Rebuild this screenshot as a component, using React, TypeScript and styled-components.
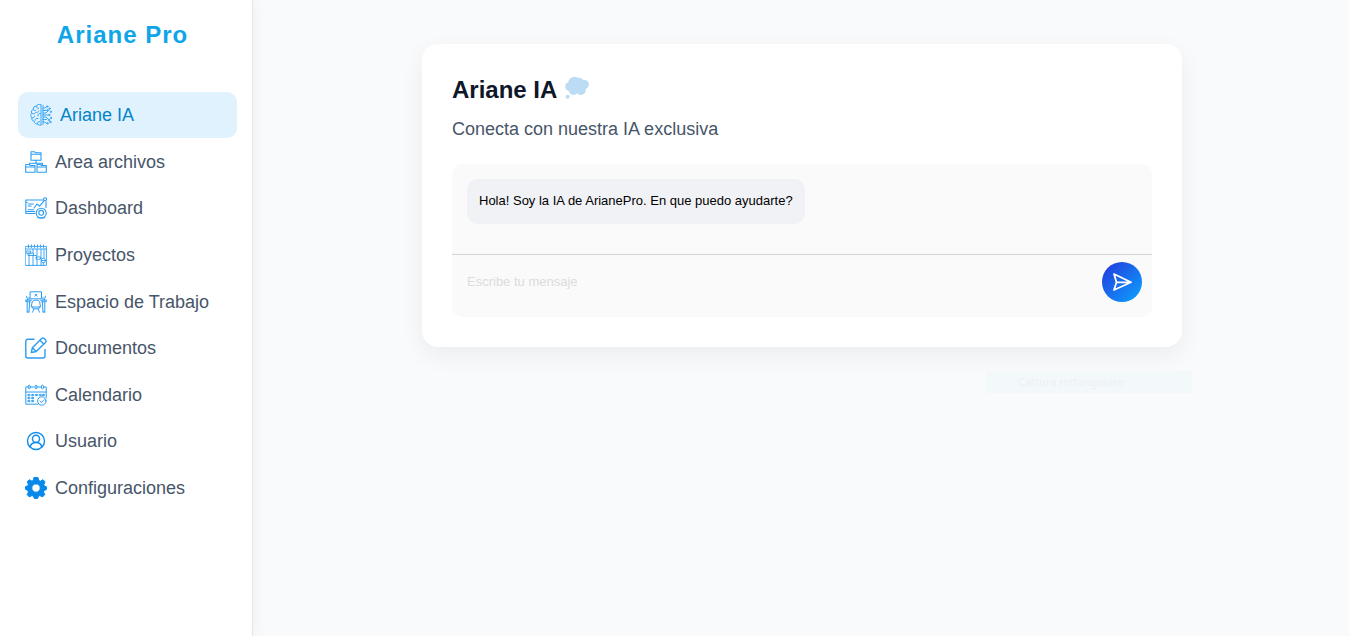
import React from 'react';
import styled, { createGlobalStyle } from 'styled-components';

const GlobalStyle = createGlobalStyle`
  * { box-sizing: border-box; }
  body {
    margin: 0;
    background: #f8fafc;
    font-family: "Liberation Sans", Arial, sans-serif;
  }
`;

const Layout = styled.div`
  display: flex;
  min-height: 100vh;
`;

const Sidebar = styled.aside`
  flex: 0 0 253px;
  padding: 20px 15px 20px 18px;
  background: #ffffff;
  border-right: 1px solid #e2e5ea;
  box-shadow: 2px 0 12px rgba(0, 0, 0, 0.04);
`;

const Brand = styled.h1`
  margin: 0 10px 42px 0;
  font-size: 24px;
  line-height: 30px;
  letter-spacing: 1px;
  text-align: center;
  color: #0ea5e9;
`;

const NavList = styled.ul`
  display: flex;
  flex-direction: column;
  justify-content: space-between;
  min-height: 419px;
  margin: 0;
  padding: 0;
  list-style: none;
`;

const NavLink = styled.a<{ $active?: boolean }>`
  display: flex;
  align-items: center;
  gap: 8px;
  height: 46px;
  padding: 0 ${({ $active }) => ($active ? 12 : 7)}px;
  border-radius: 10px;
  background: ${({ $active }) => ($active ? '#e0f2fe' : 'transparent')};
  color: ${({ $active }) => ($active ? '#0284c7' : '#475569')};
  font-size: 18px;
  line-height: 22px;
  text-decoration: none;
`;

const Icon = styled.svg`
  flex: none;
  width: 22px;
  height: 22px;
  fill: none;
  stroke: #2b9df2;
  stroke-linecap: round;
  stroke-linejoin: round;
`;

const Main = styled.main`
  flex: 1;
  min-width: 0;
  padding: 44px 20px 44px 22px;
`;

const Card = styled.section`
  position: relative;
  max-width: 760px;
  margin: 0 auto;
  padding: 30px;
  border-radius: 16px;
  background: #ffffff;
  box-shadow: 0 8px 24px rgba(0, 0, 0, 0.06);
`;

const Title = styled.h2`
  display: flex;
  align-items: center;
  gap: 8px;
  margin: 0 0 10px;
  font-size: 24px;
  line-height: 32px;
  color: #0f172a;
`;

const Cloud = styled.svg`
  width: 24px;
  height: 28px;
  fill: #bbdcf4;
`;

const Subtitle = styled.p`
  margin: 0 0 22px;
  font-size: 18px;
  line-height: 26px;
  color: #475569;
`;

const Chat = styled.div`
  overflow: hidden;
  border-radius: 10px;
  background: #fafafa;
`;

const Messages = styled.div`
  display: flex;
  flex-direction: column;
  align-items: flex-start;
  padding: 15px 15px 30px;
`;

const Bubble = styled.p`
  margin: 0;
  padding: 12px 12px 13px;
  border-radius: 10px;
  background: #f1f2f6;
  font-size: 13px;
  line-height: 20px;
  color: #000000;
`;

const Composer = styled.form`
  display: flex;
  align-items: flex-start;
  padding: 7px 10px 15px 15px;
  border-top: 1px solid #d4d4d4;
`;

const MessageInput = styled.input`
  flex: 1;
  min-width: 0;
  height: 38px;
  padding: 0;
  border: 0;
  outline: 0;
  background: transparent;
  font: 13px "Liberation Sans", Arial, sans-serif;
  color: #000000;
  &::placeholder { color: #dcdcdc; opacity: 1; }
`;

const SendButton = styled.button`
  display: grid;
  place-items: center;
  width: 40px;
  height: 40px;
  padding: 0;
  border: 0;
  border-radius: 50%;
  background: linear-gradient(135deg, #2436dc, #0ba5ff);
  cursor: pointer;
`;

const SendIcon = styled.svg`
  width: 20px;
  height: 20px;
  fill: none;
  stroke: #ffffff;
  stroke-width: 1.8;
  stroke-linejoin: round;
  stroke-linecap: round;
`;

const Hint = styled.div`
  position: absolute;
  top: calc(100% + 24px);
  right: -10px;
  width: 206px;
  padding: 0 32px;
  background: #f3f8fb;
  font: 11px/22px "Noto Sans", sans-serif;
  color: #edf1f4;
`;

const BrainIcon = () => (
  <Icon viewBox="0 0 22 22" strokeWidth=".9">
    <path d="M11 .8C8.5-.3 7 .8 6.6 2.2 4.4 2 3 3.5 3.4 5.4 1.4 6 1 8 1.9 9.2.2 10.4.4 12.8 2 13.7c-.6 2 .6 3.4 2.2 3.6.1 2 1.8 3 3.4 2.6.8 1.6 2.4 1.6 3.4 1M11 1v20M13 1.5v19M6.6 2.2c-.2 1.4.6 2.2 1.8 2.2M3.4 5.4C4 6.8 5.2 7 6 6.3M8.8 6.8c-.4 1.6-1.8 2-3 1.6M1.9 9.2c1.2 1 2.6.8 3.3 0M10.5 9.5C8.5 9 7.5 10.5 8 12M2 13.7c1.2.4 2.6-.2 2.8-1.6M8 14.5c-1.6-.6-3 .4-2.9 1.8M7.6 19.9c-.6-1.4.4-2.6 2-2.3" />
    <path d="M13 4h2l1.5-1.2M13 6.5h3.5M13 9h3l2-2M13 11h5M13 13h3l2 2M13 15.5h3.5M13 18h2l1.5 1.5" />
    {[[17.2, 2.5], [17.6, 6.2], [19.6, 4.6], [20.8, 7.8], [19.2, 11], [21, 14], [18.8, 16], [17.5, 19.3], [20.3, 18]].map(([x, y]) => (
      <circle key={`${x}-${y}`} cx={x} cy={y} r=".7" />
    ))}
  </Icon>
);

const FilesIcon = () => (
  <Icon viewBox="0 0 22 22" strokeWidth="1.1">
    <path d="M6 .8h3.6l1 1H16v7.4H6zM6 3.2h10M11 9.5v3M4.5 13.5v-1.3h13v1.3M.7 13.5h3.6l1 1H10v6.8H.7zM.7 16H10M12 13.5h3.6l1 1h4.7v6.8H12zM12 16h9.3" />
  </Icon>
);

const DashboardIcon = () => (
  <Icon viewBox="0 0 22 22" strokeWidth="1.1">
    <path d="M17.8 3H.8v13.5H10M.8 5.3h1.5M21 4.5v6M3.2 7h5M3.2 9h3M3.2 12.8h5.5M.8 14.5h9M9 11l3-4 2.5 2.2L19 3.8" />
    <circle cx="20" cy="2.2" r="1.5" />
    <circle cx="16.2" cy="16.2" r="5" />
    <circle cx="16.2" cy="15.8" r="2.4" />
    <path d="M12.8 20.8h7" />
  </Icon>
);

const ProjectsIcon = () => (
  <Icon viewBox="0 0 22 22" strokeWidth=".9">
    <path d="M.6 2.4h20.8v19H.6zM.6 5h20.8M3.5 1v2.5M6.5 1v2.5M9.5 1v2.5M12.5 1v2.5M15.5 1v2.5M18.5 1v2.5M4 10.5v11M8 11.5v10M8 5v4M12 5v7M12 15v6.4M16 5v9.5M16 18v3.4M19 5v9M1.5 7h4.2v2.2H1.5zM3.5 9.2h5v2.3h-5zM8 11.5h3.5V14M11.5 13h4v2.2h-4z" />
    <circle cx="18.3" cy="16.5" r="2.2" />
    <path d="M16.3 16.5h4M18.3 18.8v2.6" />
  </Icon>
);

const WorkspaceIcon = () => (
  <Icon viewBox="0 0 22 22" strokeWidth="1">
    <path d="M5.5.8h11v7h-11zM10 3.2l2 2M12 3.2l-2 2M.8 9.2h5.7M15.5 9.2h5.7M.8 9.2v1.6h4.7M21.2 9.2v1.6h-4.7M2.2 11v10M4.6 11l-.6 10M19.8 11v10M17.4 11l.6 10M2.2 21H4M18 21h1.8M1.5 5.2l1.2 3.6M4 6.5v2.3M20.5 5.2l-1.2 3.6M18 6.5v2.3M7.4 10.5c1-1.8 6.2-1.8 7.2 0l.9 5.5h-9zM7.4 16l.8 1.8h5.6l.8-1.8M9 18l-1.5 3.2M13 18l1.5 3.2" />
  </Icon>
);

const EditIcon = () => (
  <Icon viewBox="0 0 22 22" strokeWidth="1.4">
    <path d="M9 2.3H2.8a2 2 0 0 0-2 2V19a2 2 0 0 0 2 2H18a2 2 0 0 0 2-2v-6.5M6.3 15.5l1.1-4.8L16.6 1.5q1.3-1.2 2.6 0l1.3 1.3q1.2 1.3 0 2.6l-9.3 9.1zM15 3.2l3.8 3.8M7.5 10.8l3.7 3.7" />
  </Icon>
);

const CalendarIcon = () => (
  <Icon viewBox="0 0 22 22" strokeWidth="1">
    <path d="M3 3H.8v17.2H13M5.5 3h3.2M13 3h3.2M18.8 3h2.4v11M.8 8h20.4" />
    {[4.2, 11, 17.5].map((x) => (
      <ellipse key={x} cx={x} cy="3" rx="1.1" ry="1.9" />
    ))}
    {[11, 14, 17].map((y) =>
      [4, 7.8, 11.6, 15.4, 18.6].map((x) => (y < 12 || x < 11) && (
        <rect key={`${x}-${y}`} x={x - 0.7} y={y - 0.6} width="1.5" height="1.3" />
      )),
    )}
    <circle cx="16.8" cy="17" r="4.2" />
    <path d="M15 17l1.4 1.5 2.6-2.8" />
  </Icon>
);

const UserIcon = () => (
  <Icon viewBox="0 0 22 22" strokeWidth="1.4">
    <g stroke="#0d8cec">
      <circle cx="11" cy="11" r="8.5" />
      <circle cx="11" cy="8.8" r="3.6" />
      <path d="M5.2 17c.6-3 2.8-4.5 5.8-4.5s5.2 1.5 5.8 4.5" />
    </g>
  </Icon>
);

const GearIcon = () => (
  <Icon viewBox="0 0 22 22">
    <path
      fill="#0788ea"
      stroke="#0788ea"
      strokeWidth="1"
      fillRule="evenodd"
      d="M9 .6h4l.6 2.8 1.8.8 2.6-1.5 2 2.2-1.2 2.6.7 1.7 1.9.5v3l-2.2.6-.7 1.7 1.3 2.6-2.3 2.3-2.6-1.3-1.5.7-.7 2.1H9.3l-.8-2.2-1.6-.6-2.6 1.3-2.1-2.3L3.4 15l-.7-1.8L.6 12.5v-3l2.1-.6.7-1.7-1.2-2.4 2.1-2.1 2.6 1.4 1.6-.7zM11 6.8a4.2 4.2 0 1 0 0 8.4 4.2 4.2 0 0 0 0-8.4z"
    />
  </Icon>
);

const navItems = [
  { label: 'Ariane IA', Glyph: BrainIcon },
  { label: 'Area archivos', Glyph: FilesIcon },
  { label: 'Dashboard', Glyph: DashboardIcon },
  { label: 'Proyectos', Glyph: ProjectsIcon },
  { label: 'Espacio de Trabajo', Glyph: WorkspaceIcon },
  { label: 'Documentos', Glyph: EditIcon },
  { label: 'Calendario', Glyph: CalendarIcon },
  { label: 'Usuario', Glyph: UserIcon },
  { label: 'Configuraciones', Glyph: GearIcon },
];

export default function App() {
  return (
    <>
      <GlobalStyle />
      <Layout>
        <Sidebar>
          <Brand>Ariane Pro</Brand>
          <nav>
            <NavList>
              {navItems.map(({ label, Glyph }, i) => (
                <li key={label}>
                  <NavLink href="#" $active={i === 0}>
                    <Glyph />
                    {label}
                  </NavLink>
                </li>
              ))}
            </NavList>
          </nav>
        </Sidebar>
        <Main>
          <Card>
            <Title>
              Ariane IA
              <Cloud viewBox="0 0 24 28" aria-hidden="true">
                <circle cx="9.5" cy="7" r="6.2" />
                <circle cx="4.8" cy="10.5" r="4.6" />
                <circle cx="14" cy="7" r="5.2" />
                <circle cx="19.3" cy="8.5" r="4.6" />
                <circle cx="8.5" cy="14.2" r="4.8" />
                <circle cx="15.8" cy="14" r="5" />
                <circle cx="2.6" cy="20.8" r="2" />
              </Cloud>
            </Title>
            <Subtitle>Conecta con nuestra IA exclusiva</Subtitle>
            <Chat>
              <Messages>
                <Bubble>Hola! Soy la IA de ArianePro. En que puedo ayudarte?</Bubble>
              </Messages>
              <Composer onSubmit={(e) => e.preventDefault()}>
                <MessageInput aria-label="Mensaje" placeholder="Escribe tu mensaje" />
                <SendButton type="submit" aria-label="Enviar">
                  <SendIcon viewBox="0 0 20 20">
                    <path d="M2 2l17 8.3L2 18l2.5-7.7zM4.5 10.3H19" />
                  </SendIcon>
                </SendButton>
              </Composer>
            </Chat>
            <Hint>Cattura rettangolare</Hint>
          </Card>
        </Main>
      </Layout>
    </>
  );
}
